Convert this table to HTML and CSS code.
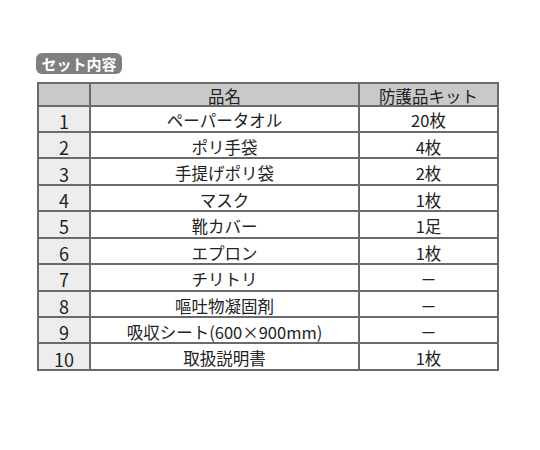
FILE: index.html
```html
<!DOCTYPE html>
<html lang="ja">
<head>
    <meta charset="UTF-8">
    <title>セット内容</title>
    <link rel="stylesheet" href="styles.css">
</head>
<body>

<div class="set-box">
    <div class="set-label">セット内容</div>

    <table class="set-table">
        <thead>
            <tr>
                <th class="no-col"></th>
                <th class="name-col">品名</th>
                <th class="kit-col">防護品キット</th>
            </tr>
        </thead>
        <tbody>
            <tr><td class="no">1</td><td>ペーパータオル</td><td>20枚</td></tr>
            <tr><td class="no">2</td><td>ポリ手袋</td><td>4枚</td></tr>
            <tr><td class="no">3</td><td>手提げポリ袋</td><td>2枚</td></tr>
            <tr><td class="no">4</td><td>マスク</td><td>1枚</td></tr>
            <tr><td class="no">5</td><td>靴カバー</td><td>1足</td></tr>
            <tr><td class="no">6</td><td>エプロン</td><td>1枚</td></tr>
            <tr><td class="no">7</td><td>チリトリ</td><td>－</td></tr>
            <tr><td class="no">8</td><td>嘔吐物凝固剤</td><td>－</td></tr>
            <tr><td class="no">9</td><td>吸収シート(600×900mm)</td><td>－</td></tr>
            <tr><td class="no">10</td><td>取扱説明書</td><td>1枚</td></tr>
        </tbody>
    </table>
</div>

</body>
</html>
```

FILE: styles.css
```css
* {
    box-sizing: border-box;
    margin: 0;
    padding: 0;
}

body {
    background: #fff;
    font-family: "Noto Sans CJK JP", "Noto Sans", sans-serif;
    color: #222;
}

.set-box {
    padding: 53px 0 0 36px;
}

/* Label badge */
.set-label {
    height: 21px;
    width: 86px;
    line-height: 21px;
    background: #7f7f7f;
    color: #fff;
    font-size: 15px;
    font-weight: bold;
    text-align: center;
    border-radius: 6px;
}

/* Table */
.set-table {
    margin-top: 8px;
    margin-left: 1px;
    width: 462px;
    height: 289px;
    border-collapse: collapse;
    border: 2px solid #5c5c5c;
    font-size: 16.5px;
}

.set-table th,
.set-table td {
    border: 2px solid #6a6a6a;
    text-align: center;
    font-weight: normal;
    line-height: 1;
    padding: 4px 0 0;
}

.set-table th {
    background: #c9c9c9;
}

.no-col {
    width: 52px;
}

.kit-col {
    width: 139px;
}

.set-table td.no {
    background: #ededed;
    font-size: 18px;
}
```
